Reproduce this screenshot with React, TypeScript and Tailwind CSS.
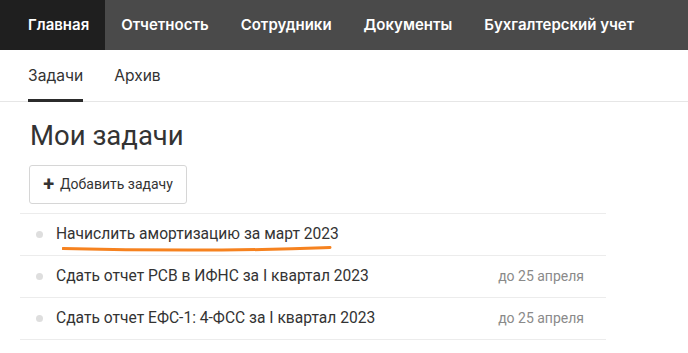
import React from 'react';

const navItems = ['Главная', 'Отчетность', 'Сотрудники', 'Документы', 'Бухгалтерский учет'];

const tasks = [
  { id: 1, title: 'Начислить амортизацию за март 2023', due: '', marked: true },
  { id: 2, title: 'Сдать отчет РСВ в ИФНС за I квартал 2023', due: 'до 25 апреля', marked: false },
  { id: 3, title: 'Сдать отчет ЕФС-1: 4-ФСС за I квартал 2023', due: 'до 25 апреля', marked: false },
];

export default function App() {
  return (
    <div className="w-[688px] h-[353px] overflow-hidden bg-white font-['Roboto',sans-serif] text-[#333]">
      {/* Главное меню */}
      <nav className="flex h-[50px] bg-[#4a4a4a] pl-3 font-['Inter',sans-serif]">
        {navItems.map((item, i) => (
          <div
            key={item}
            className={
              i === 0
                ? 'flex items-center px-4 -ml-3 pl-7 bg-[#1f1f1f] text-white text-[15px] font-semibold'
                : 'flex items-center px-4 text-white text-[15px] font-semibold'
            }
          >
            {item}
          </div>
        ))}
      </nav>

      {/* Вкладки */}
      <div className="flex h-[52px] gap-[31px] border-b border-[#e6e6e6] pl-[28px] font-['Inter',sans-serif] text-[15.6px]">
        <div className="flex items-center border-b-[3px] border-[#2b2b2b] pt-[3px] -mb-px">Задачи</div>
        <div className="flex items-center">Архив</div>
      </div>

      <div className="pl-5 w-[606px]">
        <h1 className="pl-[10px] pt-[17px] text-[27.5px] leading-[34px] font-normal text-[#333]">Мои задачи</h1>
        <div className="pl-[9px] pt-[12px] pb-[9px]">
          <button className="flex items-center gap-[6px] h-[39px] w-[158px] justify-center border border-[#d6d6d6] rounded-[3px] text-[14px] text-[#333]">
            <span className="text-[20px] leading-none font-bold -mt-[2px]">+</span>
            <span>Добавить задачу</span>
          </button>
        </div>

        <ul className="border-t border-[#ececec]">
          {tasks.map((t) => (
            <li key={t.id} className="flex items-center h-[42px] border-b border-[#ececec] pl-4 pr-[22px]">
              <span className="w-[7px] h-[7px] rounded-full bg-[#dedede] mr-[13px] shrink-0" />
              <span className="relative text-[15.6px] text-[#333] flex-1">
                {t.title}
                {t.marked && (
                  <svg
                    className="absolute left-[6px] top-[21px]"
                    width="270"
                    height="8"
                    viewBox="0 0 270 8"
                    fill="none"
                  >
                    <path
                      d="M1 4.5 C60 6 140 6.5 200 5.5 C235 5 255 4 268 3.5"
                      stroke="#f6821f"
                      strokeWidth="3"
                      strokeLinecap="round"
                    />
                  </svg>
                )}
              </span>
              {t.due && <span className="text-[14px] text-[#8a8a8a]">{t.due}</span>}
            </li>
          ))}
        </ul>
      </div>
    </div>
  );
}
